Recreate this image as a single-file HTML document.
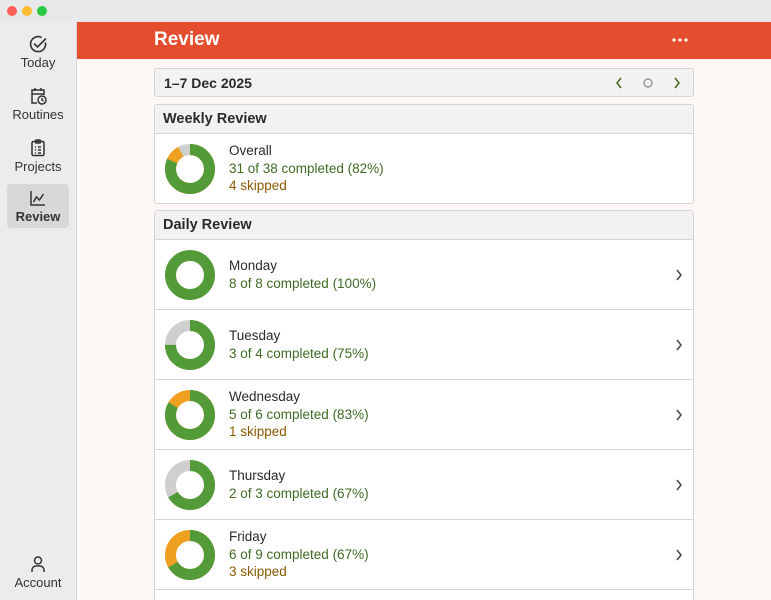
<!DOCTYPE html>
<html><head><style>
*{box-sizing:border-box;margin:0;padding:0}
html,body{width:771px;height:600px;overflow:hidden}
body{font-family:"Liberation Sans",sans-serif;background:#fdf8f5;position:relative;color:#2a2a2a}
svg{display:block}
.tb{position:absolute;left:0;top:0;width:771px;height:22px;background:#e9e8e8}
.dot{position:absolute;top:6px;width:10px;height:10px;border-radius:50%}
.sb{position:absolute;left:0;top:22px;width:77px;height:578px;background:#ececec;border-right:1px solid #d6d6d6}
.ni{position:absolute;left:7px;width:62px;height:44px;text-align:center;font-size:13px;color:#333;border-radius:4px}
.ni svg{margin:4px auto 1px}
.hd{position:absolute;left:77px;top:22px;width:694px;height:37px;background:#e44d2e;color:#fff}
.hd .t{position:absolute;left:77px;top:7px;font-size:19px;font-weight:bold}
.card{position:absolute;left:154px;width:540px;border:1px solid #d4d4d4;border-radius:3px;background:#fff;overflow:hidden}
.ch{height:29px;background:#f2f2f2;border-bottom:1px solid #d4d4d4;font-weight:bold;font-size:14.5px;padding:6px 8px}
.row{height:70px;border-bottom:1px solid #d8d8d8;position:relative}
.row svg.d{position:absolute;left:10px;top:10px}
.row .tx{position:absolute;left:74px;font-size:13.5px;line-height:17.5px}
.g{color:#3f6b25}.o{color:#8a5a00}
.chev{position:absolute;right:10px;top:29px}
</style></head><body>
<div class="tb"><div class="dot" style="left:7px;background:#fe5f57"></div><div class="dot" style="left:22px;background:#febc2e"></div><div class="dot" style="left:37px;background:#28c840"></div></div>
<div class="sb">
<div class="ni" style="top:8px"><svg width="20" height="20" viewBox="0 0 20 20" fill="none" stroke="#333" stroke-width="1.6" stroke-linecap="round"><path d="M17.5 9A7.5 7.5 0 1 1 13 3.2"/><path d="M6.5 10l3 3 8-8"/></svg>Today</div>
<div class="ni" style="top:60px"><svg width="20" height="20" viewBox="0 0 20 20" fill="none" stroke="#333" stroke-width="1.5"><path d="M9 17H4V4h12v5"/><path d="M4 8h12M7 2v3M13 2v3"/><circle cx="14" cy="14" r="4"/><path d="M14 12v2l1.5 1"/></svg>Routines</div>
<div class="ni" style="top:112px"><svg width="20" height="20" viewBox="0 0 20 20" fill="none" stroke="#333" stroke-width="1.5"><rect x="4" y="3.5" width="12" height="14" rx="1.5"/><rect x="7.5" y="2" width="5" height="3" rx="1"/><path d="M7 9h1M10 9h3M7 12h1M10 12h3M7 15h1M10 15h3"/></svg>Projects</div>
<div class="ni" style="top:162px;background:#d8d8d8;font-weight:bold"><svg width="20" height="20" viewBox="0 0 20 20" fill="none" stroke="#333" stroke-width="1.5"><path d="M3 3v14h14"/><path d="M5.5 14l3-5 3 3 4-6"/></svg>Review</div>
<div class="ni" style="top:528px"><svg width="20" height="20" viewBox="0 0 20 20" fill="none" stroke="#333" stroke-width="1.5"><circle cx="10" cy="6.5" r="3.5"/><path d="M4 18v-2a4 4 0 0 1 4-4h4a4 4 0 0 1 4 4v2"/></svg>Account</div>
</div>
<div class="hd"><div class="t">Review</div><div style="position:absolute;left:595px;top:16px;width:16px;height:4px"><svg width="16" height="4"><circle cx="2" cy="2" r="1.6" fill="#fff"/><circle cx="8" cy="2" r="1.6" fill="#fff"/><circle cx="14" cy="2" r="1.6" fill="#fff"/></svg></div></div>
<div class="card" style="top:68px;height:29px;background:#f2f2f2"><div style="font-weight:bold;font-size:14px;padding:6px 9px">1–7 Dec 2025</div>
<svg style="position:absolute;left:458px;top:8px" width="80" height="12" viewBox="0 0 80 12" fill="none" stroke-width="1.5"><path d="M8 1l-4 5 4 5" stroke="#3f6b25"/><circle cx="35" cy="6" r="4" stroke="#999"/><path d="M62 1l4 5-4 5" stroke="#3f6b25"/></svg></div>
<div class="card" style="top:104px;height:100px"><div class="ch">Weekly Review</div>
<div class="row" style="border:none"><svg class="d" width="50" height="50" viewBox="0 0 50 50"><g transform="rotate(-90 25 25)" fill="none" stroke-width="11"><circle cx="25" cy="25" r="19.5" stroke="#cfcfcf"/><circle cx="25" cy="25" r="19.5" stroke="#f0a020" stroke-dasharray="112.8 200"/><circle cx="25" cy="25" r="19.5" stroke="#539a38" stroke-dasharray="99.9 200"/></g></svg>
<div class="tx" style="top:8px">Overall<br><span class="g">31 of 38 completed (82%)</span><br><span class="o">4 skipped</span></div></div></div>
<div class="card" style="top:210px;height:395px"><div class="ch">Daily Review</div>
<div class="row"><svg class="d" width="50" height="50" viewBox="0 0 50 50"><circle cx="25" cy="25" r="19.5" fill="none" stroke="#539a38" stroke-width="11"/></svg><div class="tx" style="top:17px">Monday<br><span class="g">8 of 8 completed (100%)</span></div><svg class="chev" width="8" height="12" fill="none" stroke="#444" stroke-width="1.5"><path d="M2 1l4 5-4 5"/></svg></div>
<div class="row"><svg class="d" width="50" height="50" viewBox="0 0 50 50"><g transform="rotate(-90 25 25)" fill="none" stroke-width="11"><circle cx="25" cy="25" r="19.5" stroke="#cfcfcf"/><circle cx="25" cy="25" r="19.5" stroke="#539a38" stroke-dasharray="91.9 200"/></g></svg><div class="tx" style="top:17px">Tuesday<br><span class="g">3 of 4 completed (75%)</span></div><svg class="chev" width="8" height="12" fill="none" stroke="#444" stroke-width="1.5"><path d="M2 1l4 5-4 5"/></svg></div>
<div class="row"><svg class="d" width="50" height="50" viewBox="0 0 50 50"><g transform="rotate(-90 25 25)" fill="none" stroke-width="11"><circle cx="25" cy="25" r="19.5" stroke="#f0a020"/><circle cx="25" cy="25" r="19.5" stroke="#539a38" stroke-dasharray="102.1 200"/></g></svg><div class="tx" style="top:8px">Wednesday<br><span class="g">5 of 6 completed (83%)</span><br><span class="o">1 skipped</span></div><svg class="chev" width="8" height="12" fill="none" stroke="#444" stroke-width="1.5"><path d="M2 1l4 5-4 5"/></svg></div>
<div class="row"><svg class="d" width="50" height="50" viewBox="0 0 50 50"><g transform="rotate(-90 25 25)" fill="none" stroke-width="11"><circle cx="25" cy="25" r="19.5" stroke="#cfcfcf"/><circle cx="25" cy="25" r="19.5" stroke="#539a38" stroke-dasharray="81.7 200"/></g></svg><div class="tx" style="top:17px">Thursday<br><span class="g">2 of 3 completed (67%)</span></div><svg class="chev" width="8" height="12" fill="none" stroke="#444" stroke-width="1.5"><path d="M2 1l4 5-4 5"/></svg></div>
<div class="row"><svg class="d" width="50" height="50" viewBox="0 0 50 50"><g transform="rotate(-90 25 25)" fill="none" stroke-width="11"><circle cx="25" cy="25" r="19.5" stroke="#f0a020"/><circle cx="25" cy="25" r="19.5" stroke="#539a38" stroke-dasharray="81.7 200"/></g></svg><div class="tx" style="top:8px">Friday<br><span class="g">6 of 9 completed (67%)</span><br><span class="o">3 skipped</span></div><svg class="chev" width="8" height="12" fill="none" stroke="#444" stroke-width="1.5"><path d="M2 1l4 5-4 5"/></svg></div>
</div>
</body></html>
